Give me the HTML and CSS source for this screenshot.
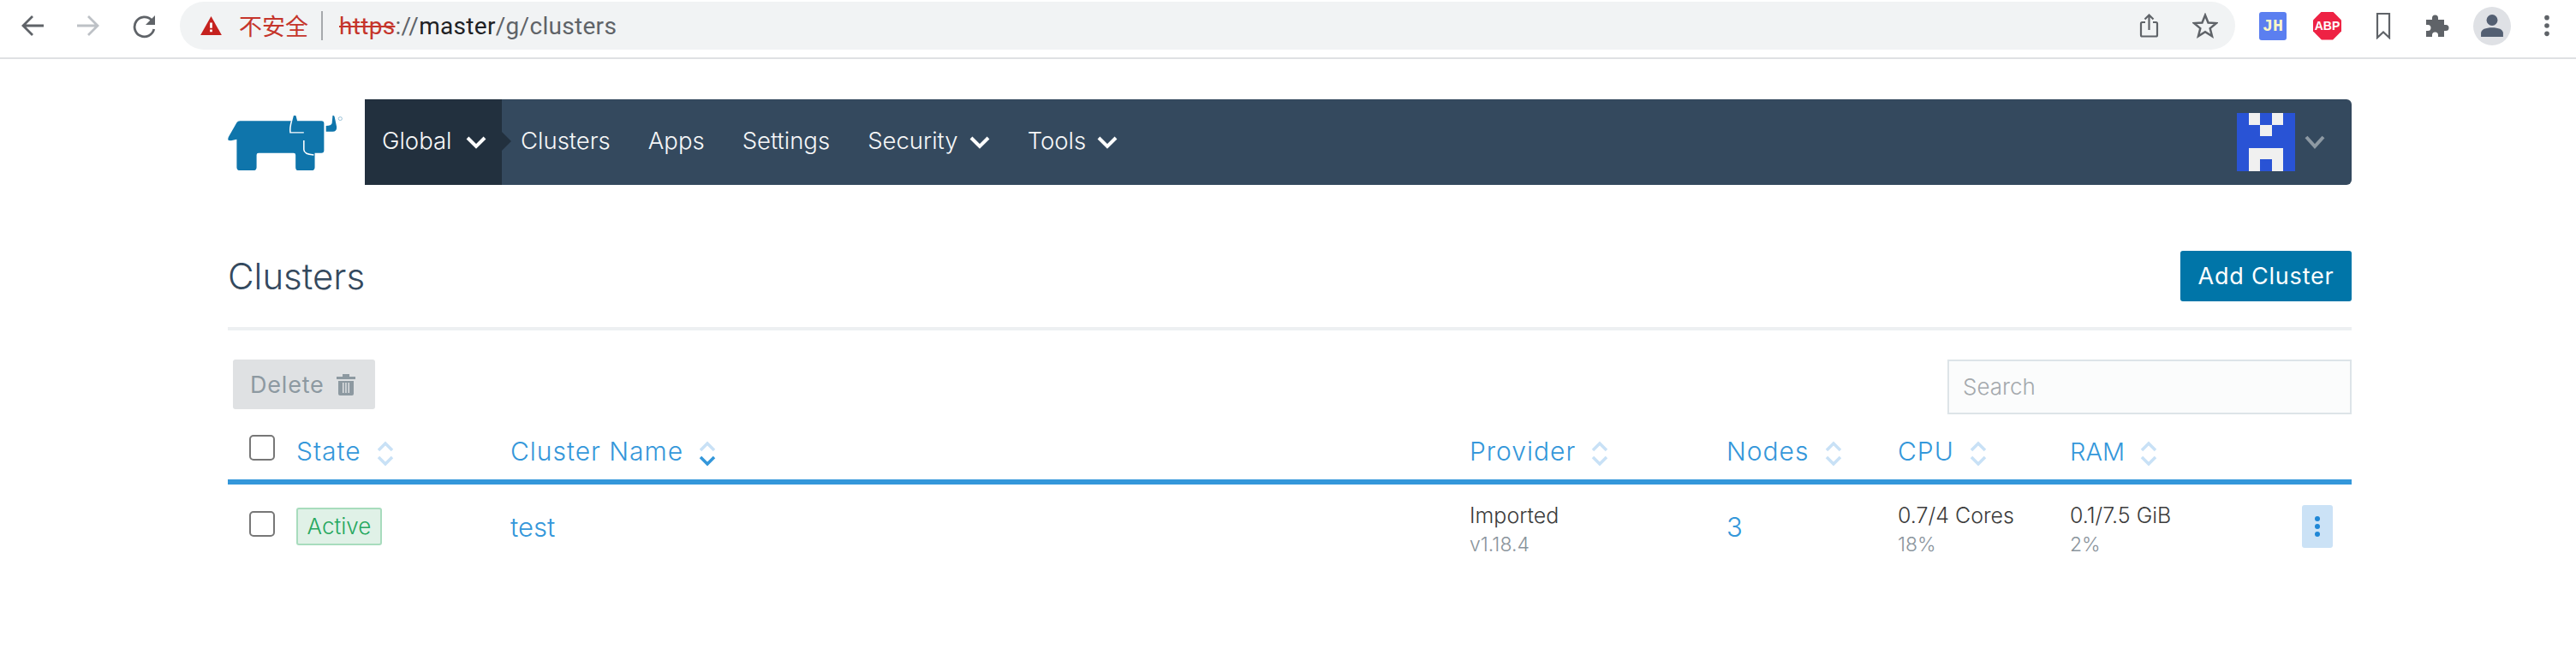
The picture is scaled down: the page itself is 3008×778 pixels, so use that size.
FILE: index.html
```html
<!DOCTYPE html>
<html lang="en">
<head>
<meta charset="utf-8">
<title>Clusters</title>
<link rel="stylesheet" href="styles.css">
</head>
<body>
<header class="chrome">
  <div class="nav-btns">
    <svg width="28" height="28" viewBox="0 0 28 28"><path d="M27 14H4M14 3L3 14l11 11" fill="none" stroke="#5f6368" stroke-width="2.800"/></svg>
    <svg width="28" height="28" viewBox="0 0 28 28"><path d="M1 14h23M14 3l11 11-11 11" fill="none" stroke="#bdc1c6" stroke-width="2.800"/></svg>
    <svg width="28" height="30" viewBox="0 0 28 30"><path d="M23 8.500A11.500 11.500 0 1 0 25.800 19" fill="none" stroke="#5f6368" stroke-width="2.800"/><path d="M27 3v11H16z" fill="#5f6368"/></svg>
  </div>
  <div class="omnibox">
    <svg width="25" height="22" viewBox="0 0 18 16"><path d="M9 0l9 16H0z" fill="#c5221f"/><path d="M8 5.500h2V10H8zM8 11.300h2v2H8z" fill="#fff"/></svg>
    <span class="insecure">不安全</span>
    <span class="sep"></span>
    <span class="url"><s class="scheme">https</s>://<span class="host">master</span>/g/clusters</span>
    <span class="omni-actions">
      <svg width="24" height="32" viewBox="0 0 24 32"><path d="M7 12H3.500A1.500 1.500 0 0 0 2 13.500V27a1.500 1.500 0 0 0 1.500 1.500h16A1.500 1.500 0 0 0 21 27V13.500A1.500 1.500 0 0 0 19.500 12H16M11.500 21V4M6.500 8.500l5-5 5 5" fill="none" stroke="#5f6368" stroke-width="2.200"/></svg>
      <svg width="30" height="30" viewBox="0 0 28 28"><path d="M14 2.500l3.300 8.200 8.700.6-6.700 5.600 2.200 8.500-7.500-4.700-7.500 4.700 2.200-8.500L2 11.300l8.700-.6z" fill="none" stroke="#5f6368" stroke-width="2.300"/></svg>
    </span>
  </div>
  <div class="ext">
    <span class="ext-jh">JH</span>
    <span class="ext-abp">ABP</span>
    <svg class="ext-mark" width="18" height="32" viewBox="0 0 18 32"><path d="M2 2h14v28l-7-6.500L2 30z" fill="none" stroke="#5f6368" stroke-width="2.200"/></svg>
    <svg class="ext-puzzle" width="28" height="28" viewBox="0 0 28 28"><path d="M1 7h7V5a3.500 3.500 0 0 1 7 0v2h7v6h2a3.500 3.500 0 0 1 0 7h-2v7H15v-2a3.500 3.500 0 0 0-7 0v2H1v-7h2a3.500 3.500 0 0 0 0-7H1z" fill="#5f6368"/></svg>
    <span class="avatar-chip"><svg width="26" height="28" viewBox="0 0 24 26"><circle cx="12" cy="7" r="6" fill="#535f72"/><path d="M0 25v-4c0-4 5-6 12-6s12 2 12 6v4z" fill="#535f72"/></svg></span>
    <svg width="10" height="28" viewBox="0 0 10 30"><circle cx="5" cy="5" r="3" fill="#5f6368"/><circle cx="5" cy="15" r="3" fill="#5f6368"/><circle cx="5" cy="25" r="3" fill="#5f6368"/></svg>
  </div>
</header>
<main class="page">
  <div class="topbar">
    <svg class="logo" width="134" height="64" viewBox="45 95 347 177" preserveAspectRatio="none">
      <path d="M47 175Q44 170 48 163L72 118Q75 112 82 112H240L244 96Q247 93 251 96L255 112H328Q336 112 336 120V208Q336 216 328 216H308V262Q308 272 298 272H258Q250 272 250 262V222Q250 216 244 216H138Q132 216 132 222V262Q132 272 122 272H82Q72 272 72 262V172L55 176Z" fill="#0f75ab"/>
      <path d="M238 112Q232 135 234 150H275M275 175V205Q275 220 305 222" fill="none" stroke="#fff" stroke-width="4"/>
      <path d="M362 95Q367 94 368 100L374 130Q376 147 362 147H342V128Q358 128 360 120Z" fill="#0f75ab"/>
      <circle cx="385" cy="105" r="5.500" fill="none" stroke="#7aaecb" stroke-width="2"/>
    </svg>
    <nav class="mainnav">
      <a class="nav-item nav-global">Global <svg class="chev" width="24" height="16" viewBox="0 0 24 16"><path d="M2 3l10 10L22 3" fill="none" stroke="#fff" stroke-width="4"/></svg><span class="notch"></span></a>
      <a class="nav-item">Clusters</a>
      <a class="nav-item">Apps</a>
      <a class="nav-item">Settings</a>
      <a class="nav-item">Security <svg class="chev" width="24" height="16" viewBox="0 0 24 16"><path d="M2 3l10 10L22 3" fill="none" stroke="#fff" stroke-width="4"/></svg></a>
      <a class="nav-item">Tools <svg class="chev" width="24" height="16" viewBox="0 0 24 16"><path d="M2 3l10 10L22 3" fill="none" stroke="#fff" stroke-width="4"/></svg></a>
      <span class="nav-user">
        <svg width="68" height="68" viewBox="0 0 5 5" shape-rendering="crispEdges"><rect width="5" height="5" fill="#2953d5"/><path d="M1 0h1v1H1zM3 0h1v1H3zM2 1h1v1H2zM1 3h3v2H3V4H2v1H1z" fill="#f0f0f0"/></svg>
        <svg width="24" height="16" viewBox="0 0 24 16"><path d="M2 2l10 11L22 2" fill="none" stroke="#8d99a3" stroke-width="4"/></svg>
      </span>
    </nav>
  </div>
  <div class="titlebar">
    <h1 class="title">Clusters</h1>
    <button class="add-btn">Add Cluster</button>
  </div>
  <div class="tools">
    <button class="del-btn">Delete <svg width="22" height="26" viewBox="0 0 22 26"><path d="M0 4h7V1h8v3h7v3H0z" fill="#8d99a1"/><path d="M2 9h18v15a2 2 0 0 1-2 2H4a2 2 0 0 1-2-2zM7 11v12h1.500V11zM10.200 11v12h1.500V11zM13.500 11v12H15V11z" fill="#8d99a1" fill-rule="evenodd"/></svg></button>
    <div class="search">Search</div>
  </div>
  <div class="grid head">
    <span class="cb-cell"><span class="cb"></span></span>
    <span class="th">State <svg class="sort" width="20" height="30" viewBox="0 0 20 30"><path d="M2 11l8-8 8 8M2 19l8 8 8-8" fill="none" stroke="#c8e1f6" stroke-width="3.500"/></svg></span>
    <span class="th">Cluster Name <svg class="sort" width="20" height="30" viewBox="0 0 20 30"><path d="M2 11l8-8 8 8" fill="none" stroke="#c8e1f6" stroke-width="3.500"/><path d="M2 19l8 8 8-8" fill="none" stroke="#3497da" stroke-width="3.500"/></svg></span>
    <span class="th">Provider <svg class="sort" width="20" height="30" viewBox="0 0 20 30"><path d="M2 11l8-8 8 8M2 19l8 8 8-8" fill="none" stroke="#c8e1f6" stroke-width="3.500"/></svg></span>
    <span class="th">Nodes <svg class="sort" width="20" height="30" viewBox="0 0 20 30"><path d="M2 11l8-8 8 8M2 19l8 8 8-8" fill="none" stroke="#c8e1f6" stroke-width="3.500"/></svg></span>
    <span class="th">CPU <svg class="sort" width="20" height="30" viewBox="0 0 20 30"><path d="M2 11l8-8 8 8M2 19l8 8 8-8" fill="none" stroke="#c8e1f6" stroke-width="3.500"/></svg></span>
    <span class="th th-ram">RAM <svg class="sort" width="20" height="30" viewBox="0 0 20 30"><path d="M2 11l8-8 8 8M2 19l8 8 8-8" fill="none" stroke="#c8e1f6" stroke-width="3.500"/></svg></span>
    <span></span>
  </div>
  <div class="grid row">
    <span class="cb-cell"><span class="cb cb-row"></span></span>
    <span class="badge-cell"><span class="badge">Active</span></span>
    <a class="link">test</a>
    <span class="stack"><span class="main-val">Imported</span><span class="sub-val">v1.18.4</span></span>
    <a class="link">3</a>
    <span class="stack"><span class="main-val">0.7/4 Cores</span><span class="sub-val">18%</span></span>
    <span class="stack"><span class="main-val">0.1/7.5 GiB</span><span class="sub-val">2%</span></span>
    <span class="more-cell"><span class="more"><i></i><i></i><i></i></span></span>
  </div>
</main>
</body>
</html>
```
FILE: styles.css
```css
* { box-sizing: border-box; }
html, body { margin: 0; padding: 0; background: #fff; }
body { font-family: "Inter", "Lato", sans-serif; font-weight: 300; width: 3008px; height: 778px; overflow: hidden; }

.chrome { height: 69px; display: flex; align-items: center; border-bottom: 2px solid #dfe1e3; padding: 0 0 7px 24px; background: #fff; }
.nav-btns { display: flex; align-items: center; gap: 37px; width: 186px; }
.omnibox { width: 2400px; height: 56px; background: #f1f3f4; border-radius: 28px; display: flex; align-items: center; padding-left: 24px; font-family: "Roboto", sans-serif; font-weight: 400; font-size: 28px; }
.insecure { color: #c5352b; margin-left: 20px; font-family: "Noto Sans CJK SC", sans-serif; font-size: 27px; line-height: 32px; }
.sep { width: 2px; height: 34px; background: #a6a9ac; margin: 0 19px 0 15px; }
.url { color: #5f6368; letter-spacing: .3px; }
.scheme { color: #c5352b; }
.host { color: #202124; }
.omni-actions { margin-left: auto; display: flex; align-items: center; gap: 38px; padding-right: 20px; }
.ext { flex: 1; display: flex; align-items: center; padding-left: 28px; }
.ext-jh { width: 32px; height: 33px; background: #5b7ff0; color: #fdf7c8; border-radius: 3px; font: 700 20px/33px "Liberation Mono", monospace; text-align: center; margin-right: 31px; }
.ext-abp { width: 33px; height: 33px; background: #ee2244; color: #fff; font: 700 14px/33px "Liberation Sans", sans-serif; text-align: center; clip-path: polygon(30% 0, 70% 0, 100% 30%, 100% 70%, 70% 100%, 30% 100%, 0 70%, 0 30%); margin-right: 40px; }
.ext-mark { margin-right: 40px; }
.ext-puzzle { margin-right: 28px; }
.avatar-chip { width: 44px; height: 45px; border-radius: 50%; background: #dfe1e5; display: flex; align-items: center; justify-content: center; margin-right: 37px; }

.page { width: 2480px; margin: 0 0 0 266px; }
.topbar { display: flex; align-items: center; margin-top: 47px; height: 100px; }
.logo { margin-right: 26px; flex: none; margin-top: 2px; }
.mainnav { flex: 1; height: 100px; background: #34495e; border-radius: 0 6px 6px 0; display: flex; align-items: center; color: #fff; font-size: 27.500px; }
.nav-item { height: 100%; display: flex; align-items: center; gap: 13px; padding: 0 22px 4px; position: relative; color: #f6f7f8; }
.nav-global { background: #22303e; width: 160px; padding: 0 0 4px 20px; gap: 16px; }
.notch { position: absolute; right: -11px; top: 38px; width: 0; height: 0; border-top: 11px solid transparent; border-bottom: 11px solid transparent; border-left: 11px solid #22303e; }
.chev { margin-top: 3px; }
.nav-user { margin-left: auto; display: flex; align-items: center; gap: 11px; padding-right: 31px; }

.titlebar { display: flex; justify-content: space-between; align-items: center; height: 170px; border-bottom: 4px solid #edf0f2; padding: 46px 0 0; }
.title { margin: 0; font-size: 42px; font-weight: 300; color: #34495e; }
.add-btn { width: 200px; height: 59px; border: 0; border-radius: 3px; background: #0075a8; color: #fff; font: 400 27px "Inter", sans-serif; letter-spacing: .8px; }

.tools { display: flex; justify-content: space-between; align-items: flex-start; padding: 0 0 0 6px; margin-top: 34px; height: 64px; }
.del-btn { width: 166px; height: 58px; border: 0; border-radius: 3px; background: #dfe1e3; color: #8d99a1; font: 400 27px "Inter", sans-serif; display: flex; align-items: center; gap: 14px; padding: 0 0 0 20px; letter-spacing: .8px; }
.search { width: 472px; height: 64px; background: #fbfcfc; border: 2px solid #dde4e8; color: #a4a9ad; font-size: 26px; line-height: 60px; padding-left: 16px; }

.grid { display: grid; grid-template-columns: 80px 250px 1120px 300px 200px 201px 257px 72px; align-items: center; }
.head { height: 82px; border-bottom: 6px solid #3497da; padding-top: 10px; }
.th { color: #3497da; font-size: 30px; display: flex; align-items: center; gap: 18px; letter-spacing: 1px; }
.th-ram { letter-spacing: 0; font-size: 29px; }
.sort { margin-top: 6px; }
.cb-cell { display: flex; padding-left: 25px; }
.cb { width: 30px; height: 30px; border: 2px solid #777; border-radius: 5px; display: block; margin-top: -8px; }
.cb-row { margin-top: -7px; }
.row { height: 98px; }
.badge-cell { display: flex; }
.badge { height: 44px; width: 100px; border: 2px solid #a8dcbd; border-radius: 3px; background: #e0f1e7; color: #27a85f; font-size: 26px; line-height: 40px; text-align: center; }
.link { color: #3497da; font-size: 31px; }
.stack { display: flex; flex-direction: column; margin-top: 8px; }
.main-val { color: #3c3c3c; font-size: 25px; line-height: 34px; }
.sub-val { color: #8a949c; font-size: 23px; line-height: 34px; }
.more-cell { display: flex; justify-content: flex-end; padding-right: 22px; }
.more { width: 36px; height: 50px; background: #cbe2f6; border-radius: 3px; display: flex; flex-direction: column; align-items: center; justify-content: center; gap: 3px; }
.more i { width: 6px; height: 6px; border-radius: 50%; background: #1f87d6; display: block; }
```
